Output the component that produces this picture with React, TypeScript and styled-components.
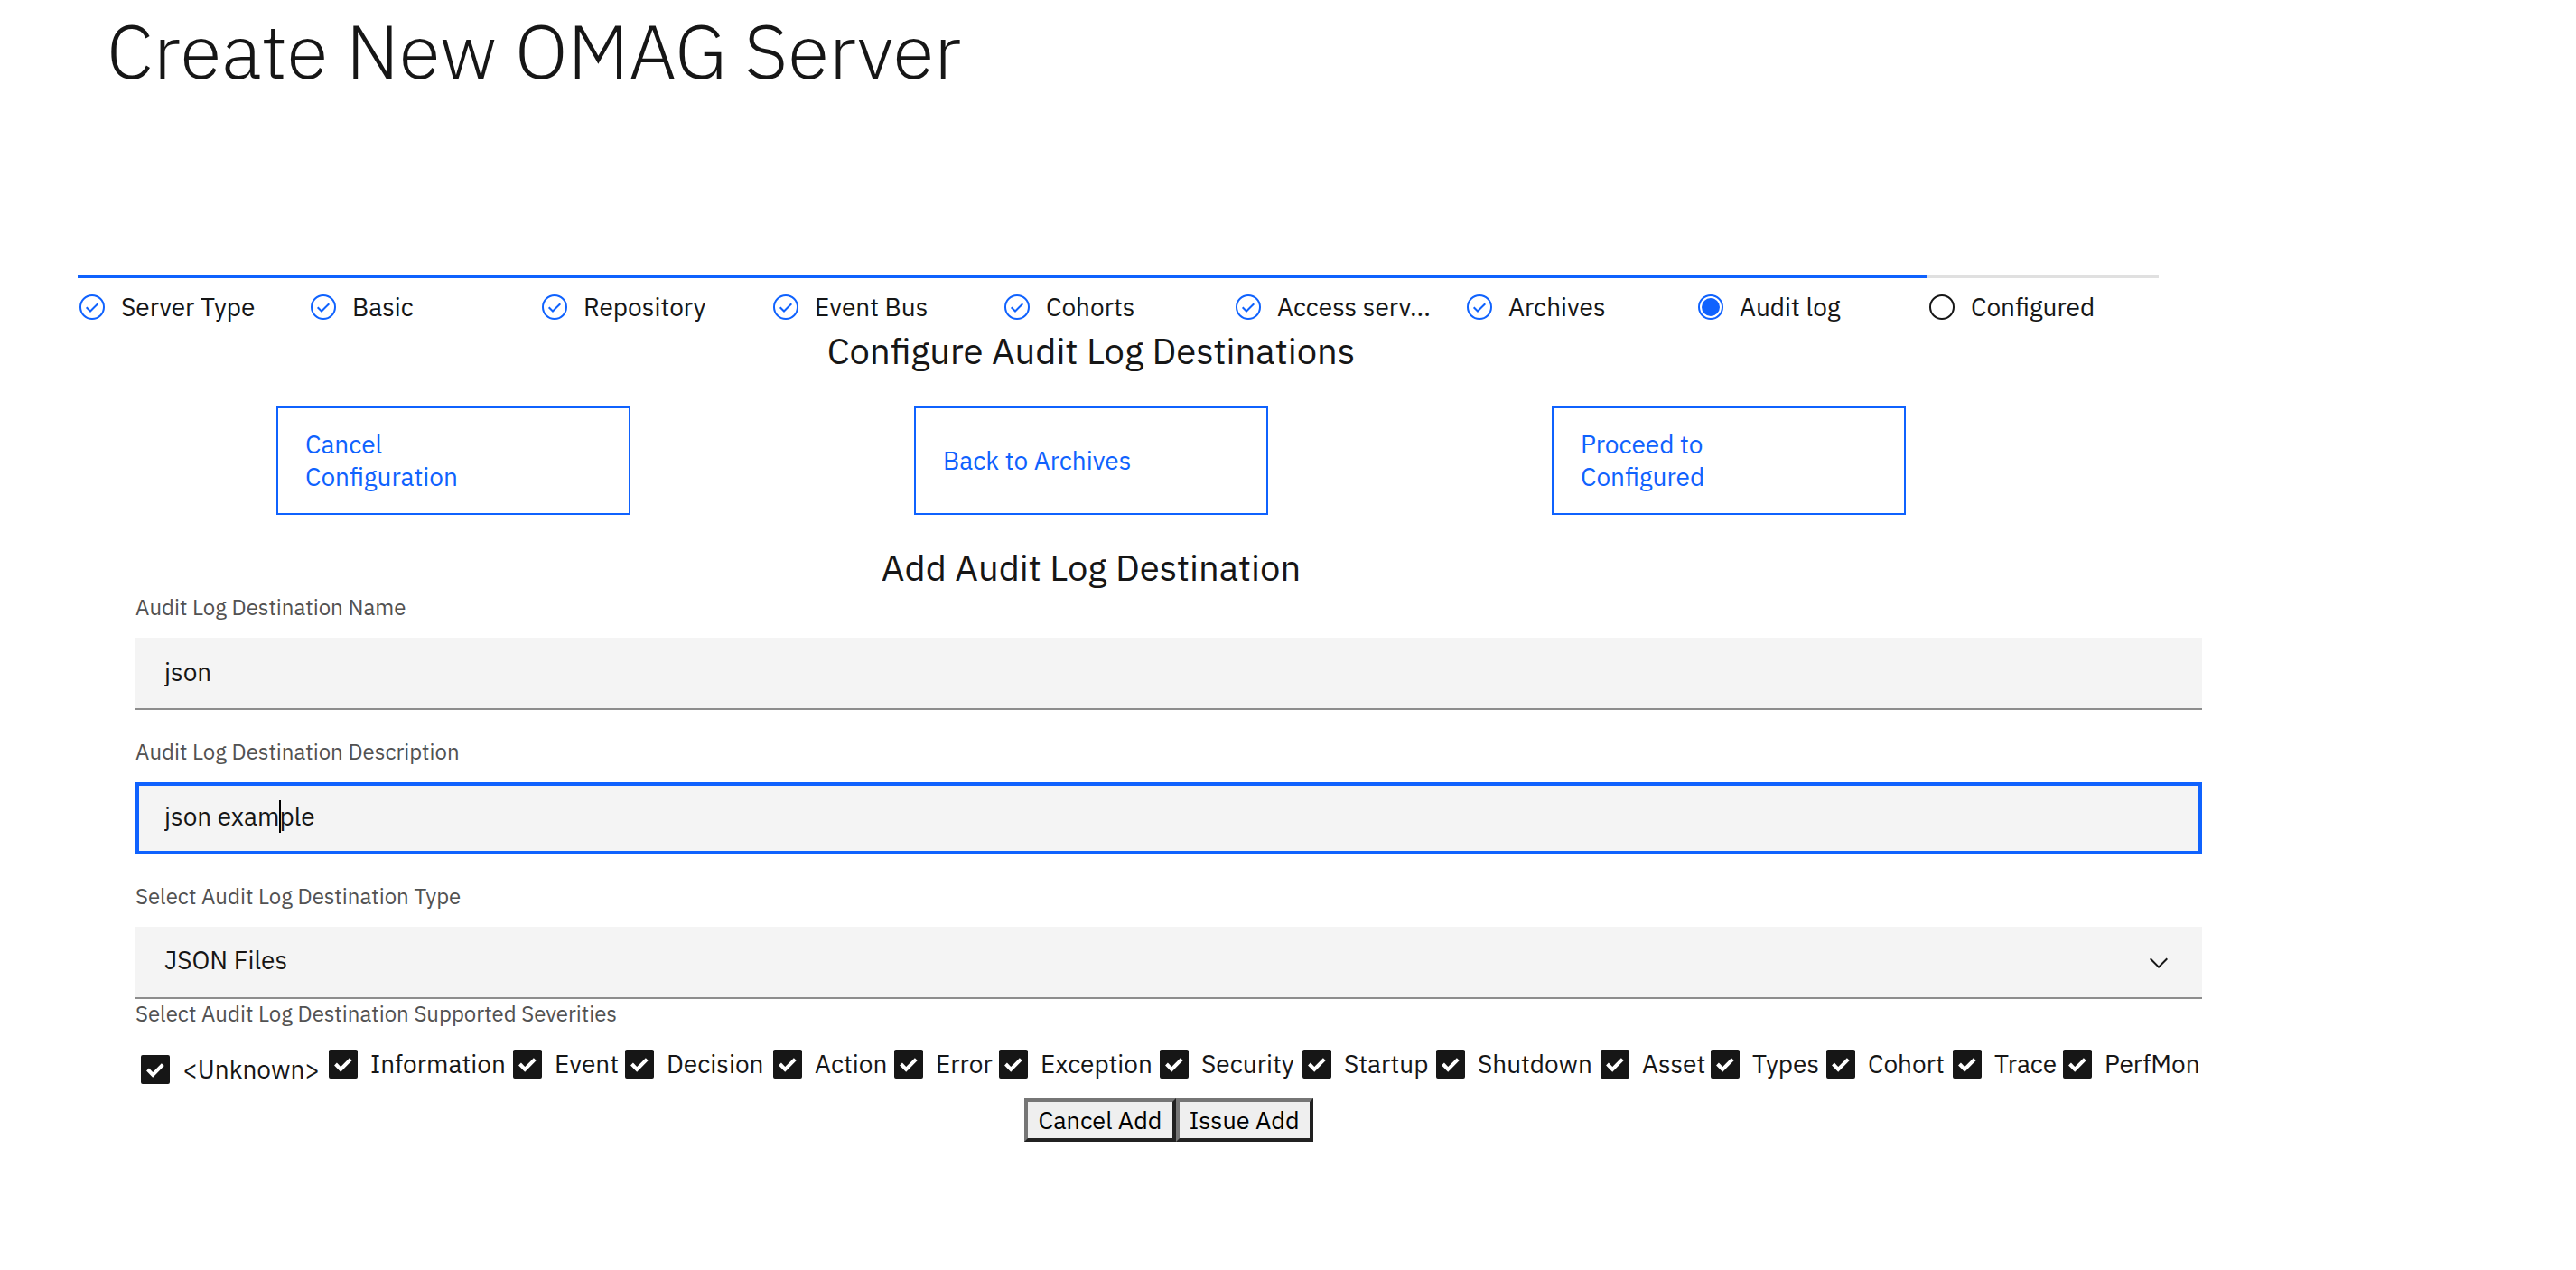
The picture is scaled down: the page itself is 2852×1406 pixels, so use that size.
import React, { useLayoutEffect, useRef, useState } from "react";
import styled, { createGlobalStyle } from "styled-components";

const sans = `"IBM Plex Sans", Roboto, "Liberation Sans", sans-serif`;
const blue = "#0f62fe";
const ink = "#161616";

const GlobalStyle = createGlobalStyle`
  *, *::before, *::after { box-sizing: border-box; }
  body { margin: 0; background: #fff; color: ${ink}; font-family: ${sans}; font-size: 28px; line-height: 36px; }
  button, input, select { font-family: inherit; font-size: inherit; line-height: inherit; color: inherit; }
`;

const Page = styled.main`
  display: flex;
  flex-direction: column;
`;

const Title = styled.h1`
  margin: 0;
  padding: 6px 118px 0;
  font-size: 84px;
  line-height: 100px;
  font-weight: 300;
`;

const Steps = styled.ol`
  display: flex;
  list-style: none;
  margin: 198px 462px 0 86px;
  padding: 0;
`;

const Step = styled.li<{ $done: boolean }>`
  flex: 1 1 0;
  min-width: 0;
  display: flex;
  align-items: center;
  gap: 16px;
  height: 56px;
  padding: 12px 0 0;
  border-top: 4px solid ${(p) => (p.$done ? blue : "#e0e0e0")};
  svg { flex: none; }
`;

const StepLabel = styled.span`
  white-space: nowrap;
`;

const Heading = styled.h2<{ $gap?: number }>`
  margin: ${(p) => p.$gap ?? 0}px 436px 0 0;
  font-size: 40px;
  line-height: 56px;
  font-weight: 400;
  text-align: center;
`;

const Navigation = styled.nav`
  display: flex;
  justify-content: space-around;
  margin: 34px 585px 0 149px;
`;

const NavButton = styled.button`
  width: 392px;
  height: 120px;
  padding: 0 126px 0 30px;
  border: 2px solid ${blue};
  background: transparent;
  color: ${blue};
  text-align: left;
`;

const Form = styled.form`
  display: flex;
  flex-direction: column;
  margin: 0 414px 0 150px;
`;

const Field = styled.div`
  display: flex;
  flex-direction: column;
  gap: 18px;
  & + & { margin-top: 30px; }
`;

const Label = styled.label`
  color: #525252;
  font-size: 24px;
  line-height: 32px;
`;

const Control = styled.div`
  position: relative;
  display: flex;
`;

const TextInput = styled.input`
  flex: 1;
  height: 80px;
  padding: 0 32px 4px;
  border: 0;
  border-bottom: 2px solid #8d8d8d;
  border-radius: 0;
  background: #f4f4f4;
  caret-color: transparent;
  outline: 4px solid transparent;
  outline-offset: -4px;
  &:focus { outline-color: ${blue}; }
`;

const Caret = styled.span`
  position: absolute;
  top: 20px;
  width: 2px;
  height: 36px;
  background: #000;
`;

const Select = styled.select`
  flex: 1;
  height: 80px;
  padding: 0 96px 4px 32px;
  border: 0;
  border-bottom: 2px solid #8d8d8d;
  border-radius: 0;
  background: #f4f4f4;
  appearance: none;
`;

const Chevron = styled.svg`
  position: absolute;
  right: 32px;
  top: 24px;
  pointer-events: none;
`;

const Severities = styled.fieldset`
  margin: 0;
  padding: 0;
  border: 0;
`;

const Legend = styled.legend`
  padding: 0;
  color: #525252;
  font-size: 24px;
  line-height: 32px;
`;

const SeverityRow = styled.div`
  display: flex;
  align-items: flex-start;
  padding-top: 22px;
`;

const Severity = styled.label<{ $share: number; $lead?: boolean }>`
  flex: ${(p) => p.$share} 0 0;
  display: flex;
  align-items: center;
  gap: 14px;
  padding: ${(p) => (p.$lead ? "6px 0 0 6px" : "0")};
  white-space: nowrap;
`;

const Tick = styled.span`
  position: relative;
  flex: none;
  display: flex;
  width: 32px;
  height: 32px;
  input { appearance: none; margin: 0; width: 32px; height: 32px; border: 2px solid ${ink}; border-radius: 2px; }
  input:checked { background: ${ink}; }
  svg { position: absolute; inset: 0; pointer-events: none; }
`;

const Actions = styled.div`
  display: flex;
  justify-content: center;
  padding-top: 14px;
`;

const PlainButton = styled.button`
  height: 48px;
  padding: 0 11px;
  border: 4px solid;
  border-color: #767676 #212121 #212121 #767676;
  background: #efefef;
  color: #000;
  font-size: 27px;
`;

type State = "complete" | "current" | "incomplete";

const StepIcon = ({ state }: { state: State }) => (
  <svg width="32" height="32" viewBox="0 0 32 32" fill="none" aria-hidden="true">
    <circle cx="16" cy="16" r="13" stroke={state === "incomplete" ? ink : blue} strokeWidth="2" />
    {state === "complete" && <path d="M9.7 16.2 L14 20.5 L22.3 12.2" stroke={blue} strokeWidth="2" />}
    {state === "current" && <circle cx="16" cy="16" r="10" fill={blue} />}
  </svg>
);

const steps: [string, State][] = [
  ["Server Type", "complete"],
  ["Basic", "complete"],
  ["Repository", "complete"],
  ["Event Bus", "complete"],
  ["Cohorts", "complete"],
  ["Access serv...", "complete"],
  ["Archives", "complete"],
  ["Audit log", "current"],
  ["Configured", "incomplete"],
];

const severities: [string, number][] = [
  ["<Unknown>", 208],
  ["Information", 204],
  ["Event", 124],
  ["Decision", 164],
  ["Action", 134],
  ["Error", 116],
  ["Exception", 178],
  ["Security", 158],
  ["Startup", 148],
  ["Shutdown", 182],
  ["Asset", 122],
  ["Types", 128],
  ["Cohort", 140],
  ["Trace", 122],
  ["PerfMon", 154],
];

function DescriptionInput() {
  const ref = useRef<HTMLInputElement>(null);
  const [value, setValue] = useState("json example");
  const [caret, setCaret] = useState(0);

  const placeCaret = () => {
    const input = ref.current;
    const context = document.createElement("canvas").getContext("2d");
    if (!input || !context) return;
    const style = getComputedStyle(input);
    context.font = `${style.fontSize} ${style.fontFamily}`;
    const before = input.value.slice(0, input.selectionStart ?? 0);
    setCaret(Math.round(parseFloat(style.paddingLeft) + context.measureText(before).width));
  };

  useLayoutEffect(() => {
    ref.current?.focus();
    ref.current?.setSelectionRange(9, 9);
    placeCaret();
  }, []);

  return (
    <Control>
      <TextInput
        id="description"
        ref={ref}
        value={value}
        onChange={(e) => setValue(e.target.value)}
        onSelect={placeCaret}
      />
      <Caret style={{ left: caret }} />
    </Control>
  );
}

export default function App() {
  return (
    <>
      <GlobalStyle />
      <Page>
        <Title>Create New OMAG Server</Title>
        <Steps>
          {steps.map(([name, state]) => (
            <Step key={name} $done={state !== "incomplete"}>
              <StepIcon state={state} />
              <StepLabel>{name}</StepLabel>
            </Step>
          ))}
        </Steps>
        <Heading>Configure Audit Log Destinations</Heading>
        <Navigation>
          <NavButton type="button">Cancel Configuration</NavButton>
          <NavButton type="button">Back to Archives</NavButton>
          <NavButton type="button">Proceed to Configured</NavButton>
        </Navigation>
        <Heading $gap={30}>Add Audit Log Destination</Heading>
        <Form onSubmit={(e) => e.preventDefault()}>
          <Field>
            <Label htmlFor="name">Audit Log Destination Name</Label>
            <Control>
              <TextInput id="name" defaultValue="json" />
            </Control>
          </Field>
          <Field>
            <Label htmlFor="description">Audit Log Destination Description</Label>
            <DescriptionInput />
          </Field>
          <Field>
            <Label htmlFor="type">Select Audit Log Destination Type</Label>
            <Control>
              <Select id="type" defaultValue="JSON Files">
                <option>JSON Files</option>
              </Select>
              <Chevron width="32" height="32" viewBox="0 0 16 16" aria-hidden="true">
                <path d="M8 11L3 6 3.7 5.3 8 9.6 12.3 5.3 13 6z" fill={ink} />
              </Chevron>
            </Control>
          </Field>
          <Severities>
            <Legend>Select Audit Log Destination Supported Severities</Legend>
            <SeverityRow>
              {severities.map(([name, share], i) => (
                <Severity key={name} $share={share} $lead={i === 0}>
                  <Tick>
                    <input type="checkbox" defaultChecked />
                    <svg width="32" height="32" viewBox="0 0 32 32" fill="none" aria-hidden="true">
                      <path d="M7.5 16 L13.2 21.8 L24.3 10.7" stroke="#fff" strokeWidth="4" />
                    </svg>
                  </Tick>
                  {name}
                </Severity>
              ))}
            </SeverityRow>
          </Severities>
          <Actions>
            <PlainButton type="button">Cancel Add</PlainButton>
            <PlainButton type="submit">Issue Add</PlainButton>
          </Actions>
        </Form>
      </Page>
    </>
  );
}
